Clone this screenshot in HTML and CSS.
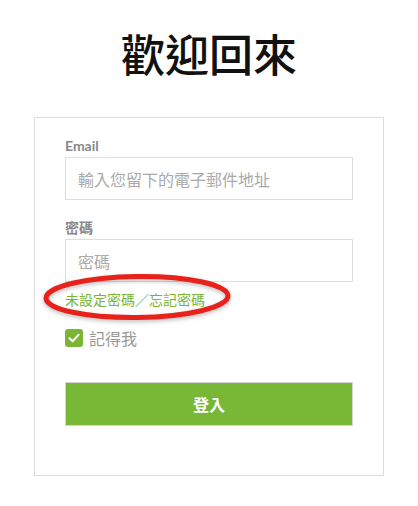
FILE: index.html
```html
<!DOCTYPE html>
<html lang="zh-Hant">
<head>
<meta charset="utf-8">
<title>歡迎回來</title>
<link rel="stylesheet" href="styles.css">
</head>
<body>
<h1 class="title">歡迎回來</h1>
<form class="card">
  <label class="label" for="email">Email</label>
  <input class="field" id="email" type="text" placeholder="輸入您留下的電子郵件地址">
  <label class="label label-second" for="pw">密碼</label>
  <input class="field" id="pw" type="password" placeholder="密碼">
  <a class="link" href="#">未設定密碼／忘記密碼</a>
  <div class="remember">
    <span class="check">
      <svg width="18" height="18" viewBox="0 0 18 18"><path d="M4.5 9.2 L7.7 12.2 L13.5 5.8" fill="none" stroke="#fff" stroke-width="2" stroke-linecap="round" stroke-linejoin="round"/></svg>
    </span>
    <span class="remember-text">記得我</span>
  </div>
  <button class="btn" type="button">登入</button>
  <svg class="circle" width="200" height="56" viewBox="0 0 200 56"><ellipse cx="100" cy="28" rx="91" ry="20.5" fill="none" stroke="#e8221b" stroke-width="5" transform="rotate(-0.7 100 28)"/></svg>
</form>
</body>
</html>
```
FILE: styles.css
```css
html, body {
  margin: 0;
  padding: 0;
  background: #fff;
}
body {
  padding-top: 31px;
  font-family: Lato, "Noto Sans CJK TC", sans-serif;
}
.title {
  margin: 0 0 42px;
  font-family: "Noto Sans CJK TC", sans-serif;
  font-size: 44px;
  line-height: 44px;
  font-weight: 500;
  text-align: center;
  color: #111;
}
.card {
  position: relative;
  box-sizing: border-box;
  width: 350px;
  margin: 0 auto;
  padding: 18px 30px 49px;
  border: 1px solid #dddddd;
  display: flex;
  flex-direction: column;
}
.label {
  display: block;
  font-family: Lato, "Noto Sans CJK TC", sans-serif;
  font-size: 14px;
  line-height: 20px;
  font-weight: 700;
  color: #888;
  margin-bottom: 1px;
}
.label-second {
  margin-top: 18px;
}
.field {
  box-sizing: border-box;
  width: 288px;
  height: 43px;
  margin: 0;
  padding: 0 12px;
  border: 1px solid #dddddd;
  border-radius: 0;
  outline: none;
  font-family: "Noto Sans CJK TC", sans-serif;
  font-size: 16px;
  color: #444;
}
.field::placeholder {
  color: #aaa;
}
.link {
  margin-top: 7px;
  font-family: "Noto Sans CJK TC", sans-serif;
  font-size: 14px;
  line-height: 20px;
  color: #7ab536;
  text-decoration: none;
}
.remember {
  margin-top: 19px;
  display: flex;
  align-items: center;
  gap: 6px;
  height: 20px;
}
.check {
  width: 18px;
  height: 18px;
  border-radius: 3px;
  background: #7ab536;
  display: flex;
}
.remember-text {
  font-family: "Noto Sans CJK TC", sans-serif;
  font-size: 16px;
  line-height: 20px;
  color: #999;
}
.btn {
  margin-top: 34px;
  box-sizing: border-box;
  width: 288px;
  height: 44px;
  border: 1px solid #d4d4d4;
  background: #79b737;
  color: #fff;
  font-family: "Noto Sans CJK TC", sans-serif;
  font-size: 16px;
  font-weight: 700;
  cursor: pointer;
}
.circle {
  position: absolute;
  left: 2px;
  top: 151px;
  filter: drop-shadow(0 2px 2px rgba(0,0,0,0.25));
}
```
